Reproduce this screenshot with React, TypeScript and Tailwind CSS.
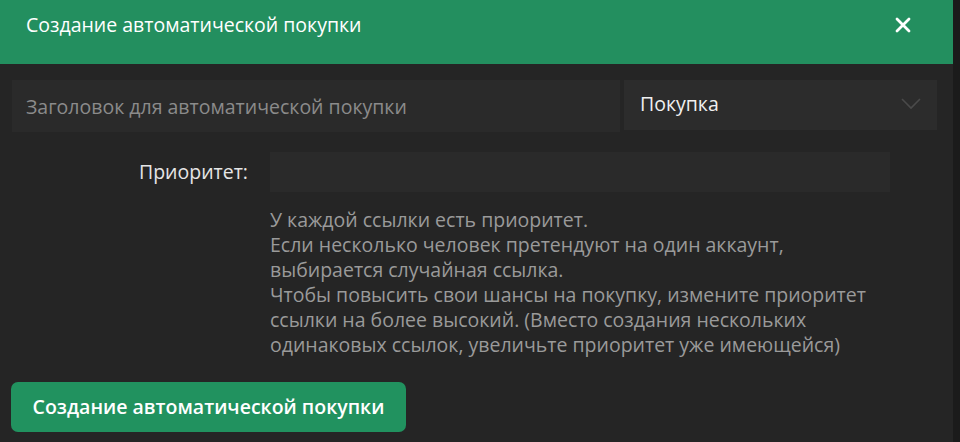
import React from "react";

export default function App() {
  return (
    <div className="w-[960px] h-[442px] bg-[#1b1b1b] flex overflow-hidden" style={{ fontFamily: '"Open Sans", "Noto Sans", sans-serif' }}>
      <div className="w-[953px] h-full bg-[#252525] flex flex-col">
        <div className="h-[64px] bg-[#238f5f] flex items-center justify-between pl-[26px] pr-[42px] shrink-0">
          <span className="text-white text-[19.5px] leading-none -mt-[14px]">Создание автоматической покупки</span>
          <svg width="16" height="16" viewBox="0 0 16 16" className="-mt-[14px]">
            <path d="M2 2 L14 14 M14 2 L2 14" stroke="#ffffff" strokeWidth="2.8" strokeLinecap="round" />
          </svg>
        </div>
        <div className="flex gap-[4px] pl-[12px] pr-[16px] mt-[16px]">
          <div className="flex-1 h-[52px] bg-[#2a2a2a] flex items-center pl-[14px] pt-[2px]">
            <span className="text-[#8b8b8b] text-[19.5px]">Заголовок для автоматической покупки</span>
          </div>
          <div className="w-[313px] h-[50px] bg-[#2c2c2c] flex items-center justify-between pl-[16px] pr-[16px] pb-[2px]">
            <span className="text-[#f0f0f0] text-[19.5px]">Покупка</span>
            <svg width="20" height="12" viewBox="0 0 20 12">
              <path d="M1 1 L10 10 L19 1" stroke="#4a4a4a" strokeWidth="1.6" fill="none" />
            </svg>
          </div>
        </div>
        <div className="flex items-center mt-[20px]">
          <div className="w-[248px] text-right text-[#e6e6e6] text-[19.5px]">Приоритет:</div>
          <div className="ml-[22px] w-[620px] h-[40px] bg-[#2a2a2a]" />
        </div>
        <div className="pl-[270px] mt-[15px] text-[#9a9a9a] text-[19.5px] leading-[25px]">
          <div>У каждой ссылки есть приоритет.</div>
          <div>Если несколько человек претендуют на один аккаунт,</div>
          <div>выбирается случайная ссылка.</div>
          <div>Чтобы повысить свои шансы на покупку, измените приоритет</div>
          <div>ссылки на более высокий. (Вместо создания нескольких</div>
          <div>одинаковых ссылок, увеличьте приоритет уже имеющейся)</div>
        </div>
        <div className="pl-[11px] mt-[25px]">
          <button className="w-[395px] h-[50px] rounded-[7px] bg-[#21925f] text-white font-semibold text-[19.5px] flex items-center justify-center">
            Создание автоматической покупки
          </button>
        </div>
      </div>
      <div className="flex-1" />
    </div>
  );
}
